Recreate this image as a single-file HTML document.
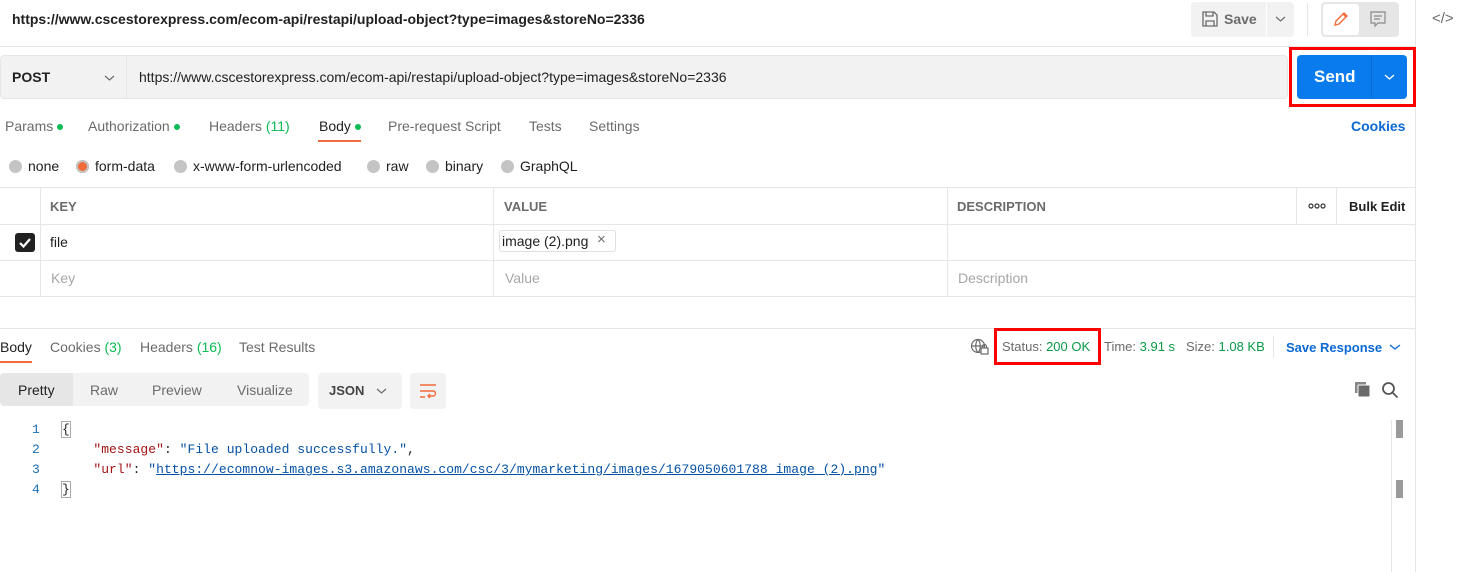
<!DOCTYPE html>
<html><head><meta charset="utf-8"><style>
*{box-sizing:border-box;margin:0;padding:0}
body{width:1469px;height:572px;overflow:hidden;background:#fff;font-family:"Liberation Sans",sans-serif;font-size:14px;color:#212121;position:relative}
.a{position:absolute;white-space:nowrap}
.g{color:#6b6b6b}
.gr{color:#0cbb52}
.dot{display:inline-block;width:6px;height:6px;border-radius:50%;background:#0cbb52;margin-left:4px;vertical-align:1px}
.rad{display:inline-block;width:13px;height:13px;border-radius:50%;background:#c4c4c4;vertical-align:-2px;margin-right:6px}
.hl{position:absolute;height:1px;background:#e6e6e6}
.vl{position:absolute;width:1px;background:#e6e6e6}
.th{font-weight:bold;color:#6b6b6b;font-size:13px}
.mono{font-family:"Liberation Mono",monospace;font-size:13px;letter-spacing:0.04px}
</style></head><body>
<div class="a" style="left:12px;top:11px;font-weight:bold;font-size:14px">https://www.cscestorexpress.com/ecom-api/restapi/upload-object?type=images&amp;storeNo=2336</div>
<div class="a" style="left:1191px;top:2px;width:75px;height:35px;background:#f2f2f2;border-radius:4px 0 0 4px"></div>
<svg class="a" style="left:1201px;top:10px" width="18" height="18" viewBox="0 0 18 18" fill="none" stroke="#6b6b6b" stroke-width="1.3"><path d="M2 2h11l3 3v11H2z"/><path d="M5 2v4h7V2M5 16v-5h8v5"/></svg>
<div class="a" style="left:1224px;top:11px;font-weight:bold;color:#6b6b6b">Save</div>
<div class="a" style="left:1267px;top:2px;width:27px;height:35px;background:#f2f2f2;border-radius:0 4px 4px 0"></div>
<svg class="a" style="left:1275px;top:15px" width="11" height="8"><path d="M1 2l4.5 4L10 2" fill="none" stroke="#6b6b6b" stroke-width="1.2"/></svg>
<div class="vl" style="left:1307px;top:3px;height:33px"></div>
<div class="a" style="left:1321px;top:2px;width:78px;height:35px;background:#e6e6e6;border-radius:4px"></div>
<div class="a" style="left:1323px;top:4px;width:36px;height:31px;background:#fff;border-radius:3px"></div>
<svg class="a" style="left:1332px;top:10px" width="18" height="18" fill="none" stroke="#f26b3a" stroke-width="1.4"><path d="M3 15l1-4 8-8 3 3-8 8z M11 4l3 3"/></svg>
<svg class="a" style="left:1369px;top:10px" width="18" height="18" fill="none" stroke="#8a8a8a" stroke-width="1.2"><path d="M2 2h14v11H9l-3 3v-3H2z M5 6h8M5 9h6"/></svg>
<div class="vl" style="left:1415px;top:0;height:572px"></div>
<div class="a" style="left:1432px;top:10px;color:#6b6b6b;font-size:15px">&lt;/&gt;</div>
<div class="hl" style="left:0;top:46px;width:1415px"></div>
<div class="a" style="left:0;top:55px;width:1288px;height:44px;background:#f2f2f2;border:1px solid #e6e6e6;border-radius:4px"></div>
<div class="vl" style="left:126px;top:56px;height:42px"></div>
<div class="a" style="left:12px;top:69px;font-weight:bold">POST</div>
<svg class="a" style="left:104px;top:74px" width="11" height="8"><path d="M1 2l4.5 4L10 2" fill="none" stroke="#6b6b6b" stroke-width="1.2"/></svg>
<div class="a" style="left:139px;top:69px">https://www.cscestorexpress.com/ecom-api/restapi/upload-object?type=images&amp;storeNo=2336</div>
<div class="a" style="left:1289px;top:47px;width:127px;height:60px;border:3px solid #f00"></div>
<div class="a" style="left:1297px;top:55px;width:110px;height:44px;background:#097bed;border-radius:4px"></div>
<div class="vl" style="left:1371px;top:55px;height:44px;background:#0a6ad0"></div>
<div class="a" style="left:1314px;top:67px;color:#fff;font-weight:bold;font-size:17px">Send</div>
<svg class="a" style="left:1384px;top:73px" width="11" height="8"><path d="M1 2l4.5 4L10 2" fill="none" stroke="#fff" stroke-width="1.3"/></svg>
<div class="a g" style="left:5px;top:118px">Params<span class="dot"></span></div>
<div class="a g" style="left:88px;top:118px">Authorization<span class="dot"></span></div>
<div class="a g" style="left:209px;top:118px">Headers <span class="gr">(11)</span></div>
<div class="a" style="left:319px;top:118px">Body<span class="dot"></span></div>
<div class="a" style="left:318px;top:140px;width:43px;height:2px;background:#f26b3a"></div>
<div class="a g" style="left:388px;top:118px">Pre-request Script</div>
<div class="a g" style="left:529px;top:118px">Tests</div>
<div class="a g" style="left:589px;top:118px">Settings</div>
<div class="a" style="left:1351px;top:118px;color:#0b69d4;font-weight:bold">Cookies</div>
<div class="a" style="left:9px;top:158px"><span class="rad"></span>none</div>
<div class="a" style="left:76px;top:158px"><span class="rad" style="background:#f26b3a;box-shadow:0 0 0 2px #c4c4c4 inset"></span>form-data</div>
<div class="a" style="left:174px;top:158px"><span class="rad"></span>x-www-form-urlencoded</div>
<div class="a" style="left:367px;top:158px"><span class="rad"></span>raw</div>
<div class="a" style="left:426px;top:158px"><span class="rad"></span>binary</div>
<div class="a" style="left:501px;top:158px"><span class="rad"></span>GraphQL</div>
<div class="hl" style="left:0;top:187px;width:1415px"></div>
<div class="hl" style="left:0;top:224px;width:1415px"></div>
<div class="hl" style="left:0;top:260px;width:1415px"></div>
<div class="hl" style="left:0;top:296px;width:1415px"></div>
<div class="vl" style="left:40px;top:187px;height:109px"></div>
<div class="vl" style="left:493px;top:187px;height:109px"></div>
<div class="vl" style="left:947px;top:187px;height:109px"></div>
<div class="vl" style="left:1296px;top:187px;height:37px"></div>
<div class="vl" style="left:1336px;top:187px;height:37px"></div>
<div class="a th" style="left:50px;top:199px">KEY</div>
<div class="a th" style="left:504px;top:199px">VALUE</div>
<div class="a th" style="left:957px;top:199px">DESCRIPTION</div>
<svg class="a" style="left:1308px;top:203px" width="18" height="6"><circle cx="3" cy="3" r="2" fill="none" stroke="#333" stroke-width="1.2"/><circle cx="9" cy="3" r="2" fill="none" stroke="#333" stroke-width="1.2"/><circle cx="15" cy="3" r="2" fill="none" stroke="#333" stroke-width="1.2"/></svg>
<div class="a" style="left:1349px;top:199px;font-weight:bold;font-size:13px">Bulk Edit</div>
<div class="a" style="left:15px;top:233px;width:20px;height:19px;background:#212121;border-radius:3px"></div>
<svg class="a" style="left:17px;top:235px" width="16" height="15"><path d="M3 8l3.5 3.5L13 4" fill="none" stroke="#fff" stroke-width="2.2"/></svg>
<div class="a" style="left:50px;top:234px">file</div>
<div class="a" style="left:499px;top:230px;width:117px;height:22px;border:1px solid #e0e0e0;border-radius:3px"></div>
<div class="a" style="left:502px;top:233px">image (2).png</div>
<div class="a g" style="left:597px;top:231px;font-size:15px">×</div>
<div class="a" style="left:51px;top:270px;color:#a6a6a6">Key</div>
<div class="a" style="left:505px;top:270px;color:#a6a6a6">Value</div>
<div class="a" style="left:958px;top:270px;color:#a6a6a6">Description</div>
<div class="hl" style="left:0;top:328px;width:1415px"></div>
<div class="a" style="left:0;top:339px">Body</div>
<div class="a" style="left:0;top:361px;width:32px;height:2px;background:#f26b3a"></div>
<div class="a g" style="left:50px;top:339px">Cookies <span class="gr">(3)</span></div>
<div class="a g" style="left:140px;top:339px">Headers <span class="gr">(16)</span></div>
<div class="a g" style="left:239px;top:339px">Test Results</div>
<svg class="a" style="left:970px;top:338px" width="20" height="18" fill="none" stroke="#6b6b6b" stroke-width="1.2"><circle cx="8" cy="8" r="6.5"/><path d="M1.5 8h13M8 1.5c-3 3-3 10 0 13M8 1.5c3 3 3 10 0 13"/><rect x="11" y="10" width="7" height="6" fill="#fff"/><path d="M12.5 10V8.5a2 2 0 014 0V10"/></svg>
<div class="a" style="left:994px;top:328px;width:107px;height:37px;border:3px solid #f00"></div>
<div class="a g" style="left:1002px;top:339px;font-size:13px">Status: <span style="color:#0a9a48">200 OK</span></div>
<div class="a g" style="left:1104px;top:339px;font-size:13px">Time: <span style="color:#0a9a48">3.91 s</span></div>
<div class="a g" style="left:1186px;top:339px;font-size:13px">Size: <span style="color:#0a9a48">1.08 KB</span></div>
<div class="vl" style="left:1273px;top:336px;height:22px"></div>
<div class="a" style="left:1286px;top:340px;color:#0b69d4;font-weight:bold;font-size:13px">Save Response</div>
<svg class="a" style="left:1389px;top:343px" width="12" height="8"><path d="M1 2l5 4 5-4" fill="none" stroke="#0b69d4" stroke-width="1.3"/></svg>
<div class="a" style="left:0;top:373px;width:309px;height:33px;background:#f2f2f2;border-radius:4px"></div>
<div class="a" style="left:0;top:373px;width:73px;height:33px;background:#e6e6e6;border-radius:4px 0 0 4px"></div>
<div class="a" style="left:18px;top:382px">Pretty</div>
<div class="a g" style="left:90px;top:382px">Raw</div>
<div class="a g" style="left:152px;top:382px">Preview</div>
<div class="a g" style="left:237px;top:382px">Visualize</div>
<div class="a" style="left:318px;top:373px;width:84px;height:36px;background:#f2f2f2;border-radius:4px"></div>
<div class="a" style="left:329px;top:383px;font-weight:bold;font-size:13px;color:#444">JSON</div>
<svg class="a" style="left:376px;top:387px" width="11" height="8"><path d="M1 2l4.5 4L10 2" fill="none" stroke="#6b6b6b" stroke-width="1.2"/></svg>
<div class="a" style="left:410px;top:373px;width:36px;height:36px;background:#f2f2f2;border-radius:4px"></div>
<svg class="a" style="left:418px;top:382px" width="20" height="18" fill="none" stroke="#f26b3a" stroke-width="1.4"><path d="M2 3h16M2 9h13a2.5 2.5 0 010 5h-5M2 15h5M12 12l-2 2 2 2"/></svg>
<svg class="a" style="left:1354px;top:381px" width="18" height="18"><rect x="1" y="1" width="11" height="11" fill="#888"/><rect x="4" y="4" width="12" height="12" rx="1" fill="#6b6b6b" stroke="#fff" stroke-width="1"/></svg>
<svg class="a" style="left:1381px;top:381px" width="18" height="18" fill="none" stroke="#555" stroke-width="1.8"><circle cx="7.5" cy="7.5" r="5.5"/><path d="M11.5 11.5l5 5"/></svg>
<div class="a mono" style="left:32px;top:420px;color:#1c6fb4;line-height:20px">1<br>2<br>3<br>4</div>
<div class="a mono" style="left:62px;top:420px;line-height:20px;color:#212121"><span style="outline:1px solid #aaa">{</span><br>&nbsp;&nbsp;&nbsp;&nbsp;<span style="color:#a31515">"message"</span>: <span style="color:#0451a5">"File uploaded successfully."</span>,<br>&nbsp;&nbsp;&nbsp;&nbsp;<span style="color:#a31515">"url"</span>: <span style="color:#0451a5">"<u>https://ecomnow-images.s3.amazonaws.com/csc/3/mymarketing/images/1679050601788_image_(2).png</u>"</span><br><span style="outline:1px solid #aaa">}</span></div>
<div class="vl" style="left:1391px;top:420px;height:152px"></div>
<div class="a" style="left:1396px;top:420px;width:7px;height:18px;background:#9a9a9a"></div>
<div class="a" style="left:1396px;top:480px;width:7px;height:18px;background:#9a9a9a"></div>
</body></html>
